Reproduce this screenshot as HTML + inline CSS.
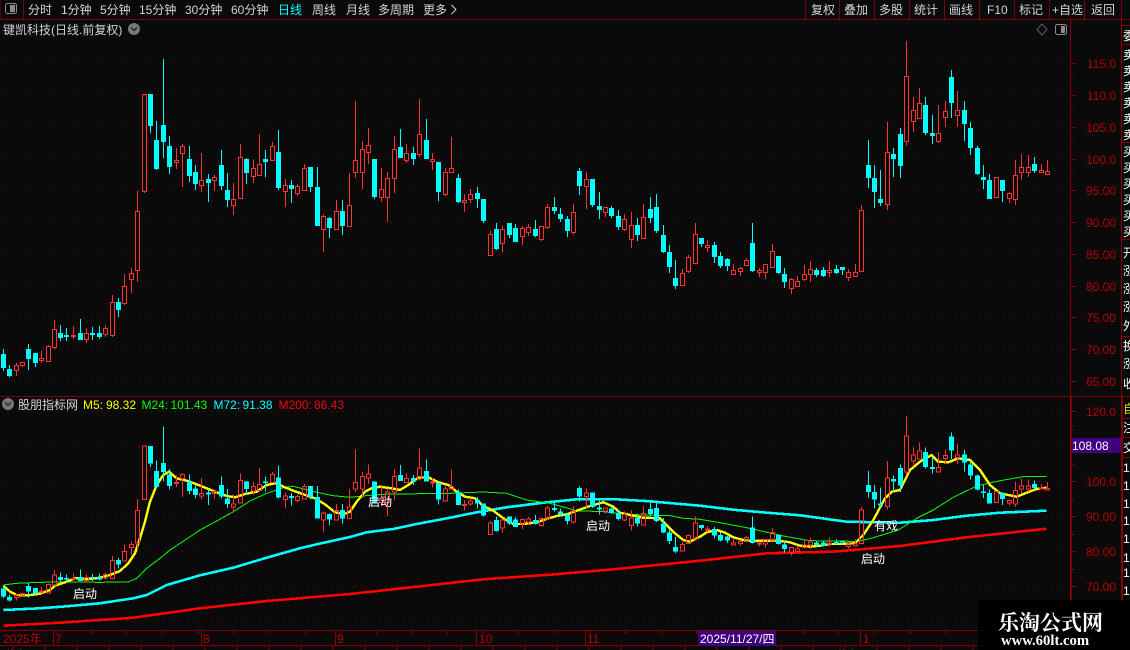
<!DOCTYPE html>
<html><head><meta charset="utf-8"><style>
html,body{margin:0;padding:0;background:#0a0a0a}
svg{display:block}
text{font-family:"Liberation Sans","WenQuanYi Zen Hei","Noto Sans CJK SC",sans-serif;font-size:12px}
.t{fill:#d4d4d4}.w{fill:#fff}.p{fill:#b40000;text-anchor:end}
</style></head><body>
<svg xmlns="http://www.w3.org/2000/svg" width="1130" height="650" viewBox="0 0 1130 650">
<rect width="1130" height="650" fill="#0a0a0a"/>
<defs>
<g id="cd" fill="none">
<g transform="translate(.5 0)">
<path stroke="#00ffff" stroke-width="1" shape-rendering="crispEdges" d="M3 349V371M9 365V377M28 344V370M35 353V367M60 325V341M66 328V341M80 319V340M92 327V340M99 326V339M118 298V317M150 94V133M156 121V170M163 59V158M169 136V174M189 146V182M195 165V190M208 174V202M221 150V190M227 173V207M246 158V184M265 150V177M278 130V190M291 180V203M310 167V192M317 167V226M329 217V238M342 200V235M374 159V199M400 129V158M413 147V165M426 119V159M438 162V201M458 174V203M477 187V208M483 199V223M496 223V250M509 223V238M515 224V242M535 220V237M554 197V214M560 208V222M567 216V237M579 168V195M592 179V207M599 192V219M611 206V218M618 210V230M637 218V241M650 197V223M656 194V233M663 225V253M669 245V273M675 260V289M701 238V247M714 242V263M720 252V268M727 258V271M752 223V272M778 256V274M784 268V288M816 268V277M823 267V277M836 265V274M842 267V275M868 140V188M874 165V208M880 170V206M893 148V177M900 128V178M925 97V135M932 115V144M951 70V118M964 101V141M970 122V155M977 146V175M983 165V189M989 174V199M1002 180V202M1034 157V173"/>
<path stroke="#00ffff" stroke-width="5" shape-rendering="crispEdges" d="M3 354V368M9 369V376M28 349V359M35 353V363M60 333V338M66 335V337M80 333V340M92 333V335M99 333V337M118 302V310M150 94V126M156 140V169M163 125V142M169 146V167M189 159V176M195 172V184M208 179V183M221 165V186M227 190V200M246 159V173M265 159V162M278 152V188M291 185V189M310 167V187M317 187V226M329 218V228M342 211V226M374 159V197M400 147V158M413 153V159M426 140V159M438 162V192M458 178V202M477 193V199M483 199V221M496 229V249M509 223V235M515 228V242M535 229V236M554 207V211M560 214V219M567 219V231M579 171V186M592 179V205M599 206V210M611 208V216M618 216V227M637 225V235M650 209V218M656 207V231M663 235V252M669 252V267M675 278V286M701 238V244M714 245V257M720 256V266M727 259V266M752 243V271M778 256V273M784 274V282M816 270V275M823 270V276M836 269V273M842 267V270M868 165V178M874 178V192M880 199V203M893 154V159M900 134V166M925 105V133M932 133V136M951 77V103M964 110V124M970 128V148M977 148V174M983 177V180M989 180V199M1002 180V191M1034 164V171"/>
<path stroke="#ff3232" stroke-width="1" shape-rendering="crispEdges" d="M16 363V365M16 370V376M22 365V367M41 351V358M41 360V363M48 345V346M54 320V329M54 347V349M73 326V335M73 336V339M86 328V333M86 339V343M105 325V328M105 334V337M112 295V302M112 335V337M124 274V286M124 303V305M131 268V273M131 279V293M137 191V211M137 270V282M144 191V193M176 148V160M176 162V169M182 144V146M182 153V187M201 153V180M201 185V192M214 175V177M214 180V191M233 183V199M233 205V215M240 144V157M253 160V168M253 176V183M259 134V164M272 142V146M272 160V161M285 179V185M285 191V207M297 184V186M297 193V196M304 164V168M323 214V216M323 229V252M336 200V211M349 173V205M355 101V160M355 172V178M362 141V149M362 172V189M368 128V145M368 152V164M381 168V189M381 197V202M387 172V178M387 197V222M394 136V149M394 178V193M406 144V153M406 160V163M419 99V134M419 154V157M432 153V159M432 161V170M445 168V172M445 194V196M451 137V168M464 194V200M464 202V212M470 189V194M470 199V203M490 231V234M490 255V256M502 226V229M502 243V252M522 226V228M522 236V245M528 224V227M528 232V236M541 239V241M547 204V207M547 227V229M573 204V212M573 232V235M586 172V179M586 186V209M605 212V217M624 214V219M624 229V231M631 212V225M631 239V248M643 204V217M682 269V273M682 285V286M688 255V257M688 271V273M695 223V234M707 240V245M707 247V252M733 264V270M733 274V275M740 267V268M740 271V276M746 258V260M759 268V270M759 272V277M765 272V279M772 244V251M791 278V279M791 288V294M797 276V281M804 265V274M804 279V281M810 261V269M810 274V282M829 261V270M829 272V277M848 269V272M848 277V281M855 264V272M861 205V210M887 122V152M887 204V210M906 41V76M906 141V146M913 97V110M913 121V132M919 88V103M938 105V133M938 141V143M945 101V111M945 117V127M957 91V110M957 115V127M1009 192V193M1009 198V203M1015 160V175M1015 199V205M1021 154V167M1021 172V180M1028 155V167M1028 172V177M1041 164V170M1041 172V173M1047 160V171"/>
</g>
<g transform="translate(.5 .5)">
<path stroke="#ff3232" stroke-width="1" vector-effect="non-scaling-stroke" shape-rendering="crispEdges" d="M14 365h4V370h-4zM20 362h4V365h-4zM39 358h4V360h-4zM46 346h4V361h-4zM52 329h4V347h-4zM71 335h4V336h-4zM84 333h4V339h-4zM103 328h4V334h-4zM110 302h4V335h-4zM122 286h4V303h-4zM129 273h4V279h-4zM135 211h4V270h-4zM142 94h4V191h-4zM174 160h4V162h-4zM180 146h4V153h-4zM199 180h4V185h-4zM212 177h4V180h-4zM231 199h4V205h-4zM238 157h4V198h-4zM251 168h4V176h-4zM257 164h4V175h-4zM270 146h4V160h-4zM283 185h4V191h-4zM295 186h4V193h-4zM302 168h4V190h-4zM321 216h4V229h-4zM334 211h4V229h-4zM347 205h4V226h-4zM353 160h4V172h-4zM360 149h4V172h-4zM366 145h4V152h-4zM379 189h4V197h-4zM385 178h4V197h-4zM392 149h4V178h-4zM404 153h4V160h-4zM417 134h4V154h-4zM430 159h4V161h-4zM443 172h4V194h-4zM449 168h4V172h-4zM462 200h4V202h-4zM468 194h4V199h-4zM488 234h4V255h-4zM500 229h4V243h-4zM520 228h4V236h-4zM526 227h4V232h-4zM539 226h4V239h-4zM545 207h4V227h-4zM571 212h4V232h-4zM584 179h4V186h-4zM603 207h4V212h-4zM622 219h4V229h-4zM629 225h4V239h-4zM641 217h4V238h-4zM680 273h4V285h-4zM686 257h4V271h-4zM693 234h4V263h-4zM705 245h4V247h-4zM731 270h4V274h-4zM738 268h4V271h-4zM744 260h4V265h-4zM757 270h4V272h-4zM763 264h4V272h-4zM770 251h4V267h-4zM789 279h4V288h-4zM795 281h4V286h-4zM802 274h4V279h-4zM808 269h4V274h-4zM827 270h4V272h-4zM846 272h4V277h-4zM853 272h4V276h-4zM859 210h4V271h-4zM885 152h4V204h-4zM904 76h4V141h-4zM911 110h4V121h-4zM917 103h4V118h-4zM936 133h4V141h-4zM943 111h4V117h-4zM955 110h4V115h-4zM994 177h4V197h-4zM1007 193h4V198h-4zM1013 175h4V199h-4zM1019 167h4V172h-4zM1026 167h4V172h-4zM1039 170h4V172h-4zM1045 171h4V174h-4z"/>
</g>
</g>
</defs>

<!-- grid -->
<g stroke="#640000" stroke-width="1" stroke-dasharray="1 5" shape-rendering="crispEdges">
<path d="M1 63.5H1068M1 95.5H1068M1 127.5H1068M1 159.5H1068M1 190.5H1068M1 222.5H1068M1 254.5H1068M1 286.5H1068M1 317.5H1068M1 349.5H1068M1 381.5H1068"/>
<path d="M1 411.5H1068M1 446.5H1068M1 481.5H1068M1 516.5H1068M1 551.5H1068M1 586.5H1068M1 620.5H1068"/>
</g>

<!-- upper candles -->
<use href="#cd"/>

<!-- lower MAs -->
<g fill="none" shape-rendering="crispEdges">
<polyline stroke="#ff0000" stroke-width="2.6" points="3.3,625.7 66.7,622.3 133.3,617.7 200,608.3 266.7,601 350,594 416.7,586.7 483.3,579.3 550,574.7 616.7,569 700,560.7 766.7,553.3 833.3,551.7 900,546 966.7,537.3 1046.7,528.7"/>
<polyline stroke="#00ffff" stroke-width="2.6" points="3.3,610 40,608.3 66.7,606.3 100,603.3 133.3,598.3 146.7,595 166.7,585 200,575.3 233.3,567.7 266.7,557.7 300,548.3 316.7,544.3 350,537 366.7,532.3 393.3,529 416.7,524 450,517.7 476.7,512.3 506.7,507.3 543.3,502.7 576.7,499.3 616.7,499.3 650,501.3 700,505.7 733.3,509.7 766.7,512.7 800,515.3 846.7,521.7 900,522.7 933.3,520 966.7,515.7 1000,512.7 1046.7,510.7"/>
<polyline stroke="#00ff00" stroke-width="1" points="3.3,585 16.7,583.3 40,582.3 66.7,582 100,582.3 128.3,582 136.7,578.3 146.7,568.3 160,558.3 170,550 186.7,539 200,530 216.7,521 233.3,511.7 250,501 266.7,493.3 276.7,490 283.3,487.7 293.3,486.3 316.7,492.3 333.3,495.7 350,497.3 370,495.3 390,494 410,494 430,493.3 450,493.3 483.3,492 506.7,493.3 526.7,500 550,503.3 576.7,510.7 603.3,511.7 623.3,514 643.3,515 670,515.7 683.3,518.3 700,519.3 720,522.7 746.7,527.7 783.3,536 810,540.7 843.3,541 856.7,541.7 873.3,537.7 898.3,530 916.7,518.3 933.3,510 953.3,497.3 976.7,486 1000,480.7 1023.3,476.7 1046.7,476.7"/>
<polyline stroke="#ffff00" stroke-width="2.4" points="3.3,585.7 10,591.7 16.7,595 28.3,595.3 40,593.7 50,590 55,585.7 65,582.3 75,578.3 88.3,579 100,577.7 110,575 120,571 128.3,563.3 135,553.3 140,538.3 145,521.7 150,501.7 156.7,485 163.3,475 169,471.7 176.7,478.3 186.7,480.7 196.7,484.3 206.7,488.3 216.7,492.3 226.7,496 235,497.3 245,494 256.7,491.7 266.7,485 276.7,483 283.3,486.7 293.3,490.7 303.3,494.3 315,498.3 325,504.3 335,512.3 343.3,514.3 350,511.7 356.7,501.7 365,491.7 371.7,488.3 380,486.7 386.7,487.7 391.7,488.3 400,490 408.3,485 418.3,477.7 428.3,477.3 438.3,482.3 448.3,485 456.7,491.7 465,496.7 475,498.3 483.3,506 493.3,510.7 503.3,518.3 513.3,524 523.3,524 536.7,522.3 546.7,519 556.7,516 566.7,514.3 576.7,510.7 590,506 603.3,502.3 613.3,506.7 620,512.7 630,515 643.3,517.7 660,518.3 668.3,526.7 675,533.3 683.3,540 690,541.7 700,536.7 706.7,532.3 716.7,530 725,532.7 733.3,537.3 743.3,540 753.3,541 766.7,540.7 780,541 790,542.3 800,545.7 810,546.7 820,545.7 830,544 843.3,544 855,543.3 863.3,535 873.3,520 885,498.3 891.7,491.7 900,490 910,470 920,461.7 931.7,455 938.3,461.7 948.3,462.3 958.3,458.3 970,460 980,470 990,485 1000,493.3 1016.7,496.7 1026.7,492.7 1036.7,489 1046.7,487.7"/>
</g>

<!-- lower candles -->
<use href="#cd" transform="matrix(1 0 0 .5495 0 394.13)"/>

<!-- labels on chart -->
<g class="w" fill="#fff">
<text x="73" y="598" fill="#fff">启动</text>
<text x="368" y="506" fill="#fff">启动</text>
<text x="586" y="530" fill="#fff">启动</text>
<text x="861" y="563" fill="#fff">启动</text>
<text x="874" y="530" fill="#fff">有戏</text>
</g>

<!-- frame lines -->
<g stroke="#840000" stroke-width="1" shape-rendering="crispEdges" fill="none">
<path d="M0 19.5H1130M0 396.5H1121M1070.5 19V396M1121.5 19V650M1121 25.5H1130M1121 44.5H1130M1121 142.5H1130M1121 239.5H1130M1121 336.5H1130M1121 396.5H1130M1121 418.5H1130M1121 437.5H1130M1121 457.5H1130"/>
<path d="M23.5 0V19M805.5 0V19M839.5 0V19M874.5 0V19M909.5 0V19M944.5 0V19M979.5 0V19M1014.5 0V19M1049.5 0V19M1084.5 0V19M1121.5 0V19M0 0V19"/>
<path d="M1070 63.5H1076M1070 95.5H1076M1070 127.5H1076M1070 159.5H1076M1070 190.5H1076M1070 222.5H1076M1070 254.5H1076M1070 286.5H1076M1070 317.5H1076M1070 349.5H1076M1070 381.5H1076"/>
<path d="M1070 79.5H1073M1070 111.5H1073M1070 143.5H1073M1070 175.5H1073M1070 206.5H1073M1070 238.5H1073M1070 270.5H1073M1070 302.5H1073M1070 333.5H1073M1070 365.5H1073"/>
<path d="M1071 411.5H1076M1071 481.5H1076M1071 516.5H1076M1071 551.5H1076M1071 586.5H1076M1071 429.5H1074M1071 464.5H1074M1071 499.5H1074M1071 534.5H1074M1071 569.5H1074M1071 604.5H1074"/>
<path stroke-width="2" d="M1071 397V630M1122 397V630"/>
<path d="M0 630.5H1070M0 645.5H1121"/>
<path stroke-width="3" stroke-dasharray="1 34.6" d="M55.5 632.5H980"/>
<path stroke-width="5" stroke-dasharray="1 31" d="M12.5 648.5H980"/>
<path d="M53.5 631V645M201.5 631V645M335.5 631V645M476.5 631V645M585.5 631V645M860.5 631V645"/>
</g>

<!-- left top icon -->
<rect x="5.5" y="3.5" width="11" height="10" rx="2" fill="none" stroke="#8c8c8c"/>
<rect x="10" y="5" width="5" height="7" fill="#8c8c8c"/>

<!-- tabs -->
<g class="t">
<text x="28" y="14" class="t">分时</text>
<text x="61" y="14" class="t">1分钟</text>
<text x="100" y="14" class="t">5分钟</text>
<text x="139" y="14" class="t">15分钟</text>
<text x="185" y="14" class="t">30分钟</text>
<text x="231" y="14" class="t">60分钟</text>
<text x="278" y="14" fill="#00ffff">日线</text>
<text x="312" y="14" class="t">周线</text>
<text x="346" y="14" class="t">月线</text>
<text x="378" y="14" class="t">多周期</text>
<text x="423" y="14" class="t">更多</text>
</g>
<polyline points="451.5,5 456,9.5 451.5,14" fill="none" stroke="#d4d4d4"/>
<g>
<text x="811" y="14" class="t">复权</text>
<text x="844" y="14" class="t">叠加</text>
<text x="879" y="14" class="t">多股</text>
<text x="914" y="14" class="t">统计</text>
<text x="949" y="14" class="t">画线</text>
<text x="987" y="14" class="t">F10</text>
<text x="1019" y="14" class="t">标记</text>
<text x="1052" y="14" class="t">+自选</text>
<text x="1091" y="14" class="t">返回</text>
</g>

<!-- title -->
<text x="3" y="34" class="t">键凯科技(日线.前复权)</text>
<circle cx="134" cy="29" r="6" fill="#787878"/>
<polyline points="131,27.5 134,30.5 137,27.5" fill="none" stroke="#222" stroke-width="1.3"/>
<path d="M1042 24L1047 29.5L1042 35L1037 29.5Z" fill="none" stroke="#606060"/>
<rect x="1055.5" y="24.5" width="11" height="10" rx="2" fill="none" stroke="#8c8c8c"/>
<rect x="1061" y="26" width="4" height="7" fill="#8c8c8c"/>

<!-- indicator header -->
<circle cx="8" cy="404" r="6" fill="#787878"/>
<polyline points="5,402.5 8,405.5 11,402.5" fill="none" stroke="#222" stroke-width="1.3"/>
<text x="18" y="409" class="t">股朋指标网</text>
<text x="83" y="409" fill="#ffff00">M5:</text><text x="106" y="409" fill="#ffff00">98.32</text>
<text x="141.5" y="409" fill="#00ff00">M24:</text><text x="170.5" y="409" fill="#00ff00">101.43</text>
<text x="213.5" y="409" fill="#00ffff">M72:</text><text x="242.5" y="409" fill="#00ffff">91.38</text>
<text x="278.5" y="409" fill="#ff0000">M200:</text><text x="314" y="409" fill="#e01010">86.43</text>

<!-- price axis -->
<g>
<text x="1116" y="68" class="p">115.0</text>
<text x="1116" y="100" class="p">110.0</text>
<text x="1116" y="132" class="p">105.0</text>
<text x="1116" y="164" class="p">100.0</text>
<text x="1116" y="195" class="p">95.00</text>
<text x="1116" y="227" class="p">90.00</text>
<text x="1116" y="259" class="p">85.00</text>
<text x="1116" y="291" class="p">80.00</text>
<text x="1116" y="322" class="p">75.00</text>
<text x="1116" y="354" class="p">70.00</text>
<text x="1116" y="386" class="p">65.00</text>
<text x="1116" y="416" class="p">120.0</text>
<text x="1116" y="486" class="p">100.0</text>
<text x="1116" y="521" class="p">90.00</text>
<text x="1116" y="556" class="p">80.00</text>
<text x="1116" y="591" class="p">70.00</text>
</g>
<rect x="1072" y="438" width="49" height="15" fill="#3f007f"/>
<text x="1072" y="450" fill="#fff">108.08</text>

<!-- right column -->
<g fill="#fff">
<text x="1123" y="40" fill="#fff">委</text>
<text x="1123" y="59" fill="#fff">卖</text><text x="1123" y="75" fill="#fff">卖</text><text x="1123" y="91" fill="#fff">卖</text><text x="1123" y="107" fill="#fff">卖</text><text x="1123" y="123" fill="#fff">卖</text><text x="1123" y="139" fill="#fff">卖</text>
<text x="1123" y="156" fill="#fff">买</text><text x="1123" y="172" fill="#fff">买</text><text x="1123" y="188" fill="#fff">买</text><text x="1123" y="204" fill="#fff">买</text><text x="1123" y="220" fill="#fff">买</text><text x="1123" y="236" fill="#fff">买</text>
<text x="1123" y="257" fill="#fff">开</text><text x="1123" y="275" fill="#fff">涨</text><text x="1123" y="293" fill="#fff">涨</text><text x="1123" y="311" fill="#fff">涨</text><text x="1123" y="330" fill="#fff">外</text><text x="1123" y="350" fill="#fff">换</text><text x="1123" y="368" fill="#fff">涨</text><text x="1123" y="388" fill="#fff">收</text>
<text x="1123" y="413" fill="#e0e000">自</text><text x="1123" y="432" fill="#fff">注</text><text x="1123" y="452" fill="#fff">交</text>
<text x="1123" y="472" fill="#fff">1</text><text x="1123" y="490" fill="#fff">1</text><text x="1123" y="508" fill="#fff">1</text><text x="1123" y="525" fill="#fff">1</text><text x="1123" y="543" fill="#fff">1</text><text x="1123" y="562" fill="#fff">1</text><text x="1123" y="577" fill="#fff">1</text><text x="1123" y="595" fill="#fff">1</text>
</g>

<!-- bottom axis -->
<g>
<text x="3" y="643" fill="#b40000">2025年</text>
<text x="55" y="643" fill="#b40000">7</text>
<text x="203" y="643" fill="#b40000">8</text>
<text x="337" y="643" fill="#b40000">9</text>
<text x="479" y="643" fill="#b40000">10</text>
<text x="587" y="643" fill="#b40000">11</text>
<text x="863" y="643" fill="#b40000">1</text>
</g>
<rect x="698" y="631" width="78" height="15" fill="#3f007f"/>
<text x="700" y="643" fill="#fff">2025/11/27/四</text>
<text x="6" y="660" fill="#d4d4d4">指标</text>
<text x="46" y="660" fill="#d4d4d4">+</text>
<text x="827" y="660" fill="#d4d4d4">+ 指标</text>

<!-- watermark -->
<rect x="978" y="600" width="152" height="50" fill="#000"/>
<text x="998" y="630" fill="#fff" style="font-family:'Noto Serif CJK SC','Liberation Serif',serif;font-size:21px;font-weight:700">乐淘公式网</text>
<text x="1001" y="645" fill="#fff" style="font-family:'Liberation Serif',serif;font-size:14.7px;font-weight:700">www.60lt.com</text>
</svg>
</body></html>
